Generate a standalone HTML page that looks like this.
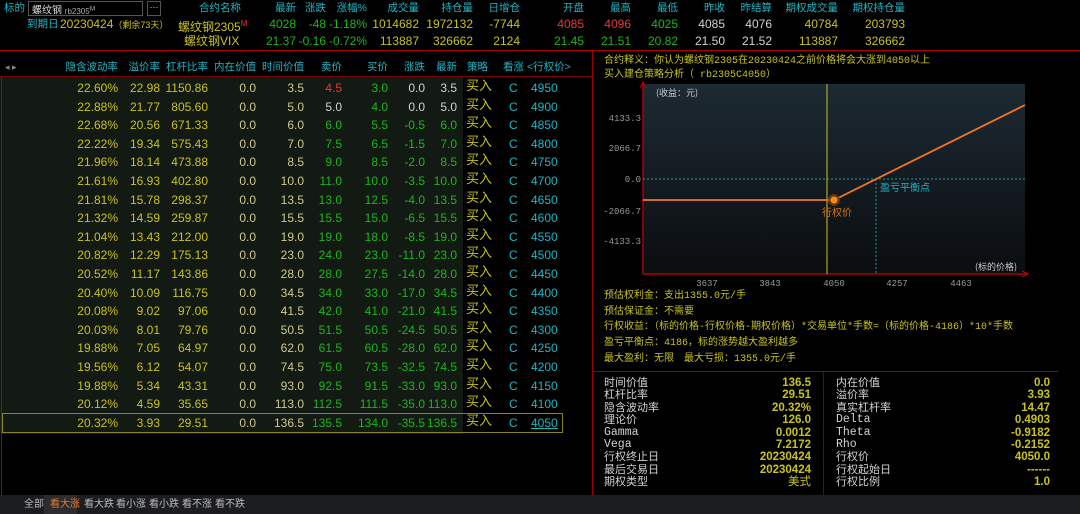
<!DOCTYPE html>
<html><head><meta charset="utf-8"><style>
*{margin:0;padding:0;box-sizing:border-box}
body{width:1080px;height:514px;background:#000;overflow:hidden;position:relative;font-family:"Liberation Sans","Noto Sans CJK SC",sans-serif;font-size:12px}
.a{position:absolute;white-space:nowrap;line-height:14px}
.r{text-align:right}
.h{font-size:10.5px}
.cy{color:#1fb5c4}.ye{color:#c8c21e}.gr{color:#1db51d}.wh{color:#d2d2d2}.rd{color:#e5383b}.lw{color:#cfc98a}
.row{position:absolute;left:0;width:590px;height:19px}
.row span{position:absolute;top:3px;text-align:right;line-height:14px}
.s{font-family:"Liberation Mono","Noto Sans CJK SC",monospace;font-size:10px}
.st span{position:absolute;line-height:12px;font-size:11.5px}
.st .k{font-size:11px}
.tb{font-size:10px;color:#bbb;top:498px}
</style></head><body>
<!-- top header -->
<div class="a cy h" style="left:4px;top:1px">标的</div>
<div class="a" style="left:28px;top:1px;width:115px;height:15px;border:1px solid #555;background:#000;color:#ddd;font-size:10px;line-height:13px;padding-left:3px">螺纹钢 <span style="font-size:8px;color:#aaa">rb2305<sup>M</sup></span></div>
<div class="a" style="left:147px;top:1px;width:14px;height:15px;border:1px solid #555;color:#ddd;font-size:9px;line-height:11px;text-align:center">···</div>
<div class="a cy h" style="left:199px;top:1px">合约名称</div>
<div class="a cy h r" style="left:246px;width:50px;top:1px">最新</div>
<div class="a cy h r" style="left:276px;width:50px;top:1px">涨跌</div>
<div class="a cy h r" style="left:317px;width:50px;top:1px">涨幅%</div>
<div class="a cy h r" style="left:359px;width:60px;top:1px">成交量</div>
<div class="a cy h r" style="left:413px;width:60px;top:1px">持仓量</div>
<div class="a cy h r" style="left:460px;width:60px;top:1px">日增仓</div>
<div class="a cy h r" style="left:524px;width:60px;top:1px">开盘</div>
<div class="a cy h r" style="left:571px;width:60px;top:1px">最高</div>
<div class="a cy h r" style="left:618px;width:60px;top:1px">最低</div>
<div class="a cy h r" style="left:665px;width:60px;top:1px">昨收</div>
<div class="a cy h r" style="left:712px;width:60px;top:1px">昨结算</div>
<div class="a cy h r" style="left:768px;width:70px;top:1px">期权成交量</div>
<div class="a cy h r" style="left:835px;width:70px;top:1px">期权持仓量</div>

<div class="a cy h" style="left:27px;top:17px">到期日</div>
<div class="a ye" style="left:60px;top:17px">20230424<span style="font-size:9px">（剩余73天）</span></div>
<div class="a ye" style="left:178px;top:17px">螺纹钢2305<sup class="rd" style="font-size:8px">M</sup></div>
<div class="a gr r" style="left:246px;width:50px;top:17px">4028</div>
<div class="a gr r" style="left:276px;width:50px;top:17px">-48</div>
<div class="a gr r" style="left:317px;width:50px;top:17px">-1.18%</div>
<div class="a ye r" style="left:359px;width:60px;top:17px">1014682</div>
<div class="a ye r" style="left:413px;width:60px;top:17px">1972132</div>
<div class="a ye r" style="left:460px;width:60px;top:17px">-7744</div>
<div class="a rd r" style="left:524px;width:60px;top:17px">4085</div>
<div class="a rd r" style="left:571px;width:60px;top:17px">4096</div>
<div class="a gr r" style="left:618px;width:60px;top:17px">4025</div>
<div class="a wh r" style="left:665px;width:60px;top:17px">4085</div>
<div class="a wh r" style="left:712px;width:60px;top:17px">4076</div>
<div class="a ye r" style="left:768px;width:70px;top:17px">40784</div>
<div class="a ye r" style="left:835px;width:70px;top:17px">203793</div>

<div class="a ye" style="left:184px;top:34px">螺纹钢VIX</div>
<div class="a gr r" style="left:246px;width:50px;top:34px">21.37</div>
<div class="a gr r" style="left:276px;width:50px;top:34px">-0.16</div>
<div class="a gr r" style="left:317px;width:50px;top:34px">-0.72%</div>
<div class="a ye r" style="left:359px;width:60px;top:34px">113887</div>
<div class="a ye r" style="left:413px;width:60px;top:34px">326662</div>
<div class="a ye r" style="left:460px;width:60px;top:34px">2124</div>
<div class="a gr r" style="left:524px;width:60px;top:34px">21.45</div>
<div class="a gr r" style="left:571px;width:60px;top:34px">21.51</div>
<div class="a gr r" style="left:618px;width:60px;top:34px">20.82</div>
<div class="a wh r" style="left:665px;width:60px;top:34px">21.50</div>
<div class="a wh r" style="left:712px;width:60px;top:34px">21.52</div>
<div class="a ye r" style="left:768px;width:70px;top:34px">113887</div>
<div class="a ye r" style="left:835px;width:70px;top:34px">326662</div>

<div class="a" style="left:0;top:50px;width:1080px;height:1px;background:#a00"></div>
<div class="a" style="left:592px;top:51px;width:1px;height:444px;background:#900"></div>
<div class="a" style="left:0;top:76px;width:592px;height:1px;background:#700"></div>

<!-- table header -->
<div class="a" style="left:5px;top:60px;color:#888;font-size:9px">◂ ▸</div>
<div class="a cy h r" style="left:38px;width:80px;top:60px">隐含波动率</div>
<div class="a cy h r" style="left:110px;width:50px;top:60px">溢价率</div>
<div class="a cy h r" style="left:148px;width:60px;top:60px">杠杆比率</div>
<div class="a cy h r" style="left:196px;width:60px;top:60px">内在价值</div>
<div class="a cy h r" style="left:244px;width:60px;top:60px">时间价值</div>
<div class="a cy h r" style="left:292px;width:50px;top:60px">卖价</div>
<div class="a cy h r" style="left:338px;width:50px;top:60px">买价</div>
<div class="a cy h r" style="left:375px;width:50px;top:60px">涨跌</div>
<div class="a cy h r" style="left:407px;width:50px;top:60px">最新</div>
<div class="a cy h" style="left:467px;top:60px">策略</div>
<div class="a cy h" style="left:503px;top:60px">看涨</div>
<div class="a cy h" style="left:527px;top:60px">&lt;行权价&gt;</div>

<div class="a" style="left:0;top:77px;width:463px;height:357px;background:#131a13"></div>
<div class="a" style="left:1px;top:77px;width:1px;height:418px;background:#333"></div>

<div id="rows"></div>
<div class="a" style="left:2px;top:413px;width:561px;height:20px;border:1px solid #8a8420"></div>

<!-- right explanation -->
<div class="a s ye" style="left:604px;top:55px">合约释义：你认为螺纹钢2305在20230424之前价格将会大涨到4050以上</div>
<div class="a s ye" style="left:604px;top:69px">买入建仓策略分析（ rb2305C4050）</div>

<svg class="a" style="left:600px;top:80px" width="440" height="212">
<defs><linearGradient id="g" x1="0" y1="0" x2="0" y2="1"><stop offset="0" stop-color="#1d2a33"/><stop offset="1" stop-color="#0b0d10"/></linearGradient></defs>
<rect x="43" y="4" width="382" height="190" fill="url(#g)"/>
<line x1="43" y1="4" x2="43" y2="194" stroke="#c00" stroke-width="1.2"/>
<line x1="43" y1="194" x2="428" y2="194" stroke="#c00" stroke-width="1.2"/>
<path d="M40 8 L43 2 L46 8" fill="none" stroke="#c00"/>
<path d="M422 191 L428 194 L422 197" fill="none" stroke="#c00"/>
<line x1="43" y1="99" x2="425" y2="99" stroke="#1a9aa0" stroke-dasharray="2,2"/>
<line x1="276" y1="99" x2="276" y2="194" stroke="#1a9aa0" stroke-dasharray="2,2"/>
<line x1="227" y1="4" x2="227" y2="194" stroke="#c8c21e"/>
<g fill="#999" font-size="9" font-family="Liberation Mono,monospace" text-anchor="end">
<text x="41" y="41">4133.3</text><text x="41" y="71">2066.7</text><text x="41" y="102">0.0</text><text x="41" y="134">-2066.7</text><text x="41" y="164">-4133.3</text></g>
<g fill="#999" font-size="9" font-family="Liberation Mono,monospace" text-anchor="middle">
<text x="107" y="206">3637</text><text x="170" y="206">3843</text><text x="234" y="206">4050</text><text x="297" y="206">4257</text><text x="361" y="206">4463</text></g>
<text x="56" y="16" fill="#ccc" font-size="9" font-family="Noto Sans CJK SC,sans-serif">(收益：元)</text>
<text x="375" y="190" fill="#ccc" font-size="9" font-family="Noto Sans CJK SC,sans-serif">(标的价格)</text>
<polyline points="43,120 234,120 425,25" fill="none" stroke="#f07820" stroke-width="1.8"/>
<circle cx="234" cy="120" r="6" fill="#7a3a10" opacity=".8"/>
<circle cx="234" cy="120" r="3.5" fill="#ff8c10"/>
<text x="222" y="136" fill="#d0761a" font-size="10" font-family="Noto Sans CJK SC,sans-serif">行权价</text>
<text x="280" y="111" fill="#1fb5c4" font-size="10" font-family="Noto Sans CJK SC,sans-serif">盈亏平衡点</text>
</svg>

<div class="a s ye" style="left:604px;top:290px">预估权利金：支出1355.0元/手</div>
<div class="a s ye" style="left:604px;top:306px">预估保证金：不需要</div>
<div class="a s ye" style="left:604px;top:321px">行权收益：（标的价格-行权价格-期权价格）*交易单位*手数=（标的价格-4186）*10*手数</div>
<div class="a s ye" style="left:604px;top:337px">盈亏平衡点：4186，标的涨势越大盈利越多</div>
<div class="a s ye" style="left:604px;top:353px">最大盈利：无限　最大亏损：1355.0元/手</div>

<div class="a" style="left:592px;top:371px;width:466px;height:1px;background:#900"></div>
<div class="a" style="left:823px;top:372px;width:1px;height:123px;background:#700"></div>

<div class="st">
<span class="wh k" style="left:604px;top:377px">时间价值</span><span class="ye r" style="left:700px;width:111px;top:377px;font-weight:bold">136.5</span>
<span class="wh k" style="left:604px;top:389px">杠杆比率</span><span class="ye" style="left:700px;width:111px;top:389px;text-align:right;font-weight:bold">29.51</span>
<span class="wh k" style="left:604px;top:402px">隐含波动率</span><span class="ye" style="left:700px;width:111px;top:402px;text-align:right;font-weight:bold">20.32%</span>
<span class="wh k" style="left:604px;top:414px">理论价</span><span class="ye" style="left:700px;width:111px;top:414px;text-align:right;font-weight:bold">126.0</span>
<span class="wh s" style="left:604px;top:427px">Gamma</span><span class="ye" style="left:700px;width:111px;top:427px;text-align:right;font-weight:bold">0.0012</span>
<span class="wh s" style="left:604px;top:439px">Vega</span><span class="ye" style="left:700px;width:111px;top:439px;text-align:right;font-weight:bold">7.2172</span>
<span class="wh k" style="left:604px;top:451px">行权终止日</span><span class="ye" style="left:700px;width:111px;top:451px;text-align:right;font-weight:bold">20230424</span>
<span class="wh k" style="left:604px;top:464px">最后交易日</span><span class="ye" style="left:700px;width:111px;top:464px;text-align:right;font-weight:bold">20230424</span>
<span class="wh k" style="left:604px;top:476px">期权类型</span><span class="ye" style="left:700px;width:111px;top:476px;text-align:right">美式</span>

<span class="wh k" style="left:836px;top:377px">内在价值</span><span class="ye" style="left:940px;width:110px;top:377px;text-align:right;font-weight:bold">0.0</span>
<span class="wh k" style="left:836px;top:389px">溢价率</span><span class="ye" style="left:940px;width:110px;top:389px;text-align:right;font-weight:bold">3.93</span>
<span class="wh k" style="left:836px;top:402px">真实杠杆率</span><span class="ye" style="left:940px;width:110px;top:402px;text-align:right;font-weight:bold">14.47</span>
<span class="wh s" style="left:836px;top:414px">Delta</span><span class="ye" style="left:940px;width:110px;top:414px;text-align:right;font-weight:bold">0.4903</span>
<span class="wh s" style="left:836px;top:427px">Theta</span><span class="ye" style="left:940px;width:110px;top:427px;text-align:right;font-weight:bold">-0.9182</span>
<span class="wh s" style="left:836px;top:439px">Rho</span><span class="ye" style="left:940px;width:110px;top:439px;text-align:right;font-weight:bold">-0.2152</span>
<span class="wh k" style="left:836px;top:451px">行权价</span><span class="ye" style="left:940px;width:110px;top:451px;text-align:right;font-weight:bold">4050.0</span>
<span class="wh k" style="left:836px;top:464px">行权起始日</span><span class="ye" style="left:940px;width:110px;top:464px;text-align:right;font-weight:bold">------</span>
<span class="wh k" style="left:836px;top:476px">行权比例</span><span class="ye" style="left:940px;width:110px;top:476px;text-align:right;font-weight:bold">1.0</span>
</div>

<!-- bottom bar -->
<div class="a" style="left:0;top:495px;width:1080px;height:19px;background:#1c1d20"></div>
<div class="a" style="left:44px;top:495px;width:33px;height:19px;background:#2c2d31"></div>
<div class="a tb" style="left:24px">全部</div>
<div class="a tb" style="left:50px;color:#f07820">看大涨</div>
<div class="a tb" style="left:84px">看大跌</div>
<div class="a tb" style="left:116px">看小涨</div>
<div class="a tb" style="left:149px">看小跌</div>
<div class="a tb" style="left:182px">看不涨</div>
<div class="a tb" style="left:215px">看不跌</div>

<script>
var d=[
["22.60%","22.98","1150.86","3.5","4.5","3.0","0.0","3.5","4950"],
["22.88%","21.77","805.60","5.0","5.0","4.0","0.0","5.0","4900"],
["22.68%","20.56","671.33","6.0","6.0","5.5","-0.5","6.0","4850"],
["22.22%","19.34","575.43","7.0","7.5","6.5","-1.5","7.0","4800"],
["21.96%","18.14","473.88","8.5","9.0","8.5","-2.0","8.5","4750"],
["21.61%","16.93","402.80","10.0","11.0","10.0","-3.5","10.0","4700"],
["21.81%","15.78","298.37","13.5","13.0","12.5","-4.0","13.5","4650"],
["21.32%","14.59","259.87","15.5","15.5","15.0","-6.5","15.5","4600"],
["21.04%","13.43","212.00","19.0","19.0","18.0","-8.5","19.0","4550"],
["20.82%","12.29","175.13","23.0","24.0","23.0","-11.0","23.0","4500"],
["20.52%","11.17","143.86","28.0","28.0","27.5","-14.0","28.0","4450"],
["20.40%","10.09","116.75","34.5","34.0","33.0","-17.0","34.5","4400"],
["20.08%","9.02","97.06","41.5","42.0","41.0","-21.0","41.5","4350"],
["20.03%","8.01","79.76","50.5","51.5","50.5","-24.5","50.5","4300"],
["19.88%","7.05","64.97","62.0","61.5","60.5","-28.0","62.0","4250"],
["19.56%","6.12","54.07","74.5","75.0","73.5","-32.5","74.5","4200"],
["19.88%","5.34","43.31","93.0","92.5","91.5","-33.0","93.0","4150"],
["20.12%","4.59","35.65","113.0","112.5","111.5","-35.0","113.0","4100"],
["20.32%","3.93","29.51","136.5","135.5","134.0","-35.5","136.5","4050"]];
var h="";
d.forEach(function(r,i){
 var t=78+i*18.6;
 var sc=i==0?"rd":(i==1?"wh":"gr"),bc="gr",cc=i<2?"wh":"gr",lc=i<2?"wh":"gr";
 h+='<div class="row" style="top:'+t+'px">'+
 '<span class="ye" style="left:38px;width:80px">'+r[0]+'</span>'+
 '<span class="ye" style="left:110px;width:50px">'+r[1]+'</span>'+
 '<span class="ye" style="left:148px;width:60px">'+r[2]+'</span>'+
 '<span class="lw" style="left:206px;width:50px">0.0</span>'+
 '<span class="lw" style="left:254px;width:50px">'+r[3]+'</span>'+
 '<span class="'+sc+'" style="left:292px;width:50px">'+r[4]+'</span>'+
 '<span class="'+bc+'" style="left:338px;width:50px">'+r[5]+'</span>'+
 '<span class="'+cc+'" style="left:375px;width:50px">'+r[6]+'</span>'+
 '<span class="'+lc+'" style="left:407px;width:50px">'+r[7]+'</span>'+
 '<span class="ye" style="left:466px;text-align:left;top:1px;font-size:13px">买入</span>'+
 '<span class="cy" style="left:509px;text-align:left">C</span>'+
 '<span class="cy" style="left:531px;text-align:left;'+(i==18?'text-decoration:underline':'')+'">'+r[8]+'</span></div>';
});
document.getElementById("rows").innerHTML=h;
</script>
</body></html>
